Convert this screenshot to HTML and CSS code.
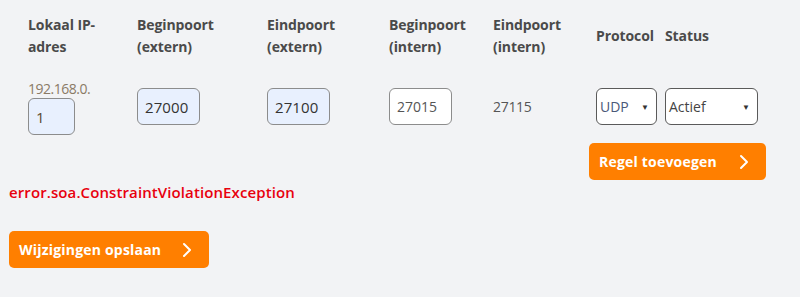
FILE: index.html
```html
<!DOCTYPE html>
<html lang="nl">
<head>
<meta charset="utf-8">
<title>Port forwarding</title>
<link rel="stylesheet" href="styles.css">
</head>
<body>
<div class="page">
  <div class="grid">
    <div class="th">Lokaal IP-<br>adres</div>
    <div class="th">Beginpoort<br>(extern)</div>
    <div class="th">Eindpoort<br>(extern)</div>
    <div class="th">Beginpoort<br>(intern)</div>
    <div class="th">Eindpoort<br>(intern)</div>
    <div class="th">Protocol</div>
    <div class="th">Status</div>

    <div class="td ip">
      <span class="prefix">192.168.0.</span>
      <input class="field auto small" type="text" value="1">
    </div>
    <div class="td"><input class="field auto" type="text" value="27000"></div>
    <div class="td"><input class="field auto" type="text" value="27100"></div>
    <div class="td"><input class="field plain" type="text" value="27015"></div>
    <div class="td value">27115</div>
    <div class="td">
      <div class="select proto"><span class="sel-text udp">UDP</span><span class="arrow">▼</span></div>
    </div>
    <div class="td">
      <div class="select status"><span class="sel-text">Actief</span><span class="arrow">▼</span></div>
    </div>
  </div>

  <div class="add-row">
    <button class="btn btn-add" type="button">Regel toevoegen
      <svg class="chev" width="10" height="16" viewBox="0 0 10 16"><path d="M2 2 L8 8 L2 14" fill="none" stroke="#fff" stroke-width="2" stroke-linecap="round" stroke-linejoin="round"/></svg>
    </button>
  </div>

  <p class="error">error.soa.ConstraintViolationException</p>

  <button class="btn btn-save" type="button">Wijzigingen opslaan
    <svg class="chev" width="10" height="16" viewBox="0 0 10 16"><path d="M2 2 L8 8 L2 14" fill="none" stroke="#fff" stroke-width="2" stroke-linecap="round" stroke-linejoin="round"/></svg>
  </button>
</div>
</body>
</html>
```

FILE: styles.css
```css
html, body {
  margin: 0;
  padding: 0;
  background: #f2f3f5;
}
body {
  font-family: "Open Sans", "Liberation Sans", sans-serif;
  color: #4a4a4a;
  width: 800px;
  height: 297px;
  overflow: hidden;
}
.page {
  padding: 14px 0 0 9px;
}
.grid {
  display: grid;
  grid-template-columns: 109px 130px 122px 104px 103px 69px 100px;
  margin-left: 19px;
  align-items: center;
}
.th {
  font-weight: 700;
  font-size: 14px;
  line-height: 22px;
  color: #4a4a4a;
  letter-spacing: -0.1px;
}
.td {
  margin-top: 20px;
  font-size: 14px;
}
.ip {
  display: flex;
  flex-direction: column;
  align-items: flex-start;
}
.prefix {
  color: #8a7a66;
  font-size: 14px;
  line-height: 18px;
  letter-spacing: -0.5px;
  margin-top: 2px;
  margin-bottom: 0;
}
.field {
  box-sizing: border-box;
  height: 37px;
  width: 63px;
  border: 1px solid #8c8c8c;
  border-radius: 6px;
  font-family: inherit;
  font-size: 14px;
  padding: 0 0 0 7px;
  color: #333;
  outline: none;
}
.field.small {
  width: 47px;
  color: #5a4a30;
}
.auto {
  background: #e8f0fe;
  font-size: 15px;
  letter-spacing: 0.1px;
}
.plain {
  background: #fff;
  color: #555;
}
.value {
  color: #555;
  letter-spacing: -0.3px;
}
.select {
  box-sizing: border-box;
  height: 37px;
  border: 1px solid #5a5a5a;
  border-radius: 6px;
  background: #fff;
  display: flex;
  align-items: center;
  justify-content: space-between;
  padding: 0 7px 0 3px;
}
.proto { width: 61px; }
.status { width: 93px; }
.sel-text {
  font-size: 14px;
  color: #444;
}
.sel-text.udp { color: #4a5878; }
.arrow {
  font-size: 8px;
  color: #333;
}
.add-row {
  display: flex;
  justify-content: flex-end;
  width: 757px;
  margin-top: 8px;
}
.btn {
  box-sizing: border-box;
  height: 37px;
  border: none;
  border-radius: 5px;
  background: #ff7f00;
  color: #fff;
  font-family: inherit;
  font-weight: 700;
  font-size: 14px;
  letter-spacing: 0.2px;
  display: flex;
  align-items: center;
  justify-content: space-between;
  padding: 0 17px 0 10px;
}
.btn-add { width: 177px; }
.btn-save { width: 200px; }
.error {
  margin: 2px 0 0 0;
  color: #e8000d;
  font-size: 15px;
  font-weight: 600;
  line-height: 20px;
  letter-spacing: 0.1px;
}
.btn-save {
  margin-top: 29px;
}
```
